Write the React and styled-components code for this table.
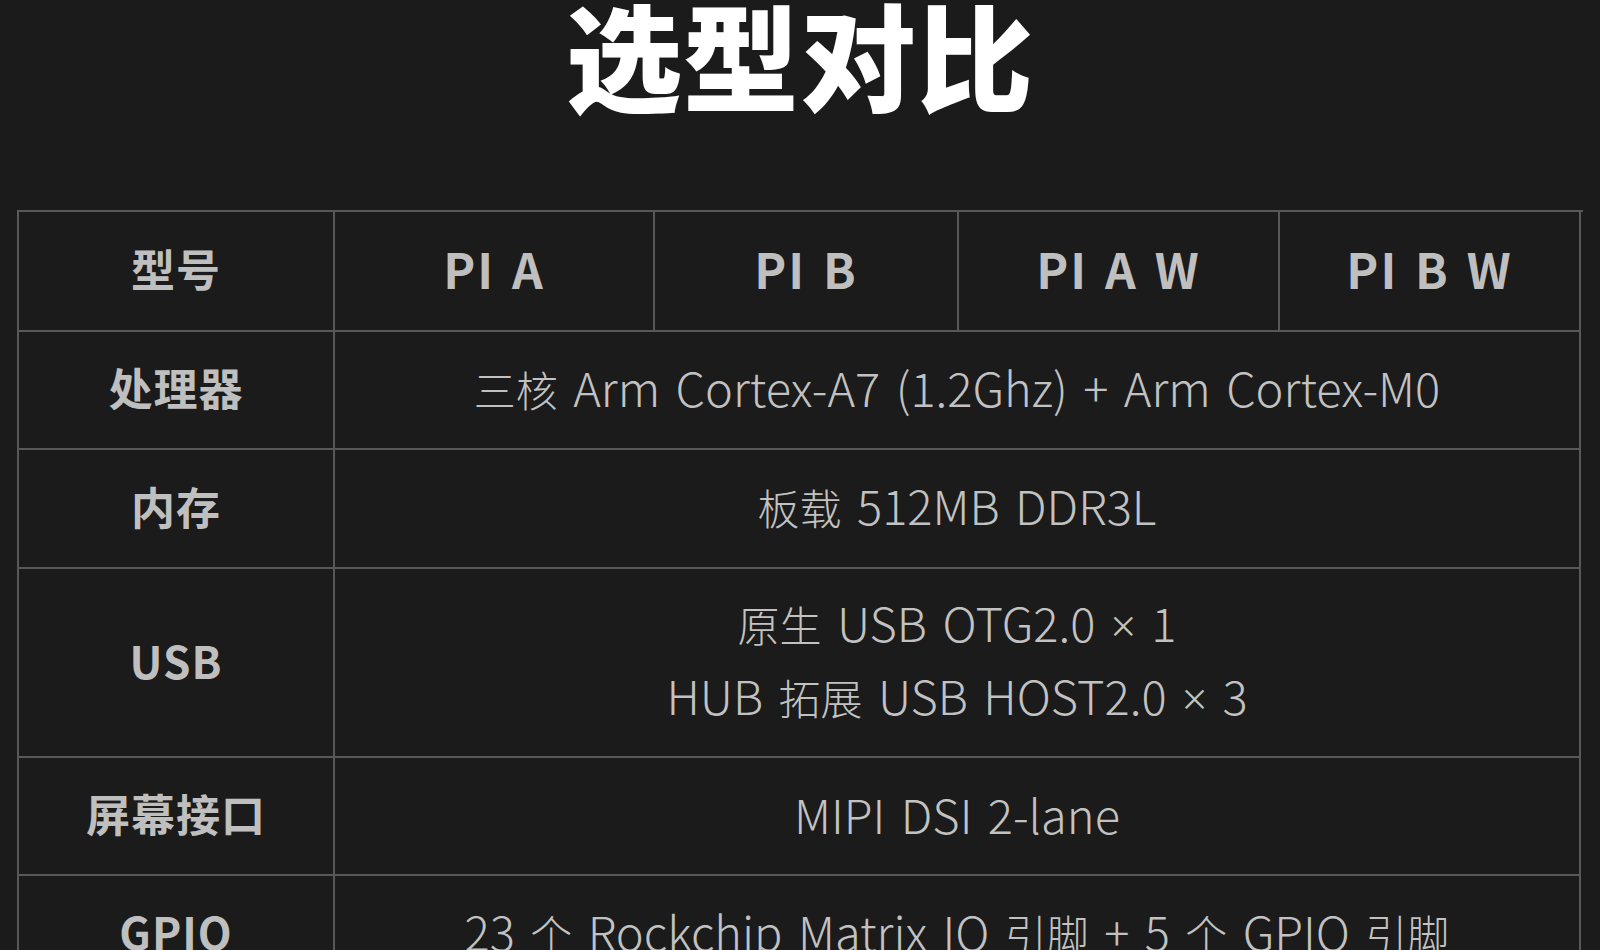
import React from "react";
import styled, { createGlobalStyle } from "styled-components";

const GlobalStyle = createGlobalStyle`
  html, body {
    margin: 0;
    padding: 0;
    background: #1b1b1b;
  }
  body {
    font-family: "Noto Sans CJK SC", "Noto Sans", sans-serif;
    color: #c0c0c0;
    overflow: hidden;
  }
`;

const models = ["PI A", "PI B", "PI A W", "PI B W"];

const specs = [
  { label: "处理器", lines: ["三核 Arm Cortex-A7 (1.2Ghz) + Arm Cortex-M0"], height: 118 },
  { label: "内存", lines: ["板载 512MB DDR3L"], height: 119 },
  { label: "USB", lines: ["原生 USB OTG2.0 × 1", "HUB 拓展 USB HOST2.0 × 3"], height: 189 },
  { label: "屏幕接口", lines: ["MIPI DSI 2-lane"], height: 118 },
  { label: "GPIO", lines: ["23 个 Rockchip Matrix IO 引脚 + 5 个 GPIO 引脚"], height: 118 },
];

// CJK runs are set a little smaller than the latin text around them,
// and the multiplication sign comes from a latin face (CJK one is full-width)
function mixed(text) {
  return text.split(/([\u4e00-\u9fff]+|×)/).map((part, i) => {
    if (part === "×") return <Times key={i}>{part}</Times>;
    if (/[\u4e00-\u9fff]/.test(part)) return <Han key={i}>{part}</Han>;
    return part;
  });
}

export default function App() {
  return (
    <Page>
      <GlobalStyle />
      <Heading>
        <Title>选型对比</Title>
      </Heading>
      <Table>
        <Cell $h={120}>型号</Cell>
        {models.map((m) => (
          <Cell key={m} $h={120} $model>{m}</Cell>
        ))}
        {specs.map((row) => (
          <React.Fragment key={row.label}>
            <Cell $h={row.height}>{row.label}</Cell>
            <Value $h={row.height}>
              {row.lines.map((line) => (
                <Line key={line}>{mixed(line)}</Line>
              ))}
            </Value>
          </React.Fragment>
        ))}
      </Table>
    </Page>
  );
}

const Page = styled.div`
  width: 1600px;
  height: 950px;
  overflow: hidden;
  background: #1b1b1b;
`;

const Heading = styled.div`
  height: 210px;
  display: flex;
  justify-content: center;
`;

const Title = styled.h1`
  margin: 0;
  font-family: "Noto Sans CJK SC", sans-serif;
  font-weight: 900;
  font-size: 116px;
  line-height: 104px;
  color: #ffffff;
  letter-spacing: 1px;
`;

const Table = styled.div`
  margin: 0 17px;
  display: grid;
  grid-template-columns: 316px 320px 304px 321px 301px;
  border-top: 2px solid #585858;
  border-left: 2px solid #585858;
`;

const Cell = styled.div`
  height: ${(p) => p.$h}px;
  box-sizing: border-box;
  padding-bottom: 6px;
  display: flex;
  align-items: center;
  justify-content: center;
  border-right: 2px solid #585858;
  border-bottom: 2px solid #585858;
  font-weight: 700;
  font-size: ${(p) => (p.$model ? "48px" : "44px")};
  letter-spacing: ${(p) => (p.$model ? "2px" : "1px")};
  word-spacing: ${(p) => (p.$model ? "4px" : "0")};
  color: #bfbfbf;
`;

const Value = styled.div`
  grid-column: 2 / 6;
  height: ${(p) => p.$h}px;
  box-sizing: border-box;
  padding-bottom: 6px;
  display: flex;
  flex-direction: column;
  align-items: center;
  justify-content: center;
  border-right: 2px solid #585858;
  border-bottom: 2px solid #585858;
  font-weight: 300;
  font-size: 47px;
  color: #c2c2c2;
`;

const Line = styled.div`
  line-height: 69px;
  word-spacing: 5px;
  white-space: nowrap;
`;

const Han = styled.span`
  font-size: 42px;
`;

const Times = styled.span`
  font-family: "Noto Sans", sans-serif;
  font-weight: 300;
  font-size: 44px;
`;
